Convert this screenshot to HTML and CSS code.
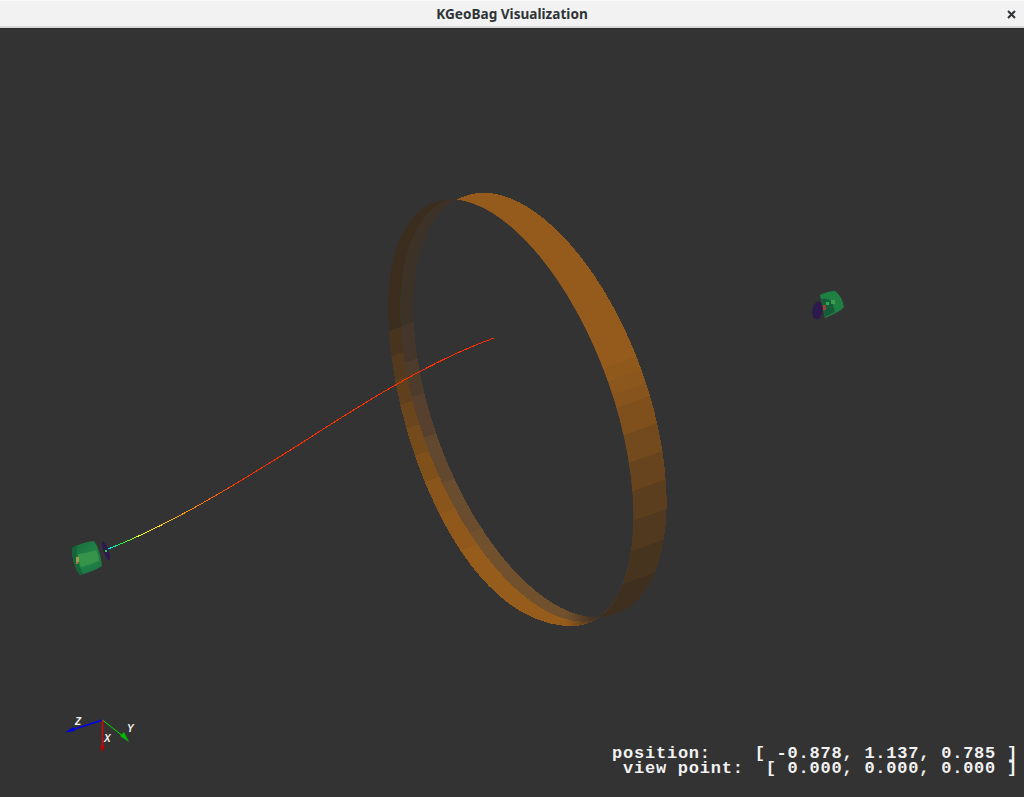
FILE: index.html
```html
<!DOCTYPE html>
<html lang="en">
<head>
	<meta charset="utf-8">
	<title>KGeoBag Visualization</title>
	<link rel="stylesheet" href="styles.css">
</head>
<body>
	<div class="window">
		<header class="titlebar">
			<span class="title">KGeoBag Visualization</span>
			<svg class="close" width="9" height="9" viewBox="0 0 9 9"><path d="M1 1L8 8M8 1L1 8"/></svg>
		</header>
		<main class="viewport">
			<svg class="scene" width="1024" height="769" viewBox="0 28 1024 769">
				<defs>
					<linearGradient id="band-right" gradientUnits="userSpaceOnUse" x1="640" y1="340" x2="735" y2="603">
						<stop offset="0" stop-color="#945b1c"/><stop offset=".05" stop-color="#945b1c"/>
						<stop offset=".05" stop-color="#90591c"/><stop offset=".1" stop-color="#90591c"/>
						<stop offset=".1" stop-color="#8b571c"/><stop offset=".15" stop-color="#8b571c"/>
						<stop offset=".15" stop-color="#86541c"/><stop offset=".2" stop-color="#86541c"/>
						<stop offset=".2" stop-color="#7f501c"/><stop offset=".3" stop-color="#7f501c"/>
						<stop offset=".3" stop-color="#724a1d"/><stop offset=".4" stop-color="#724a1d"/>
						<stop offset=".4" stop-color="#67441d"/><stop offset=".5" stop-color="#67441d"/>
						<stop offset=".5" stop-color="#5b3e1e"/><stop offset=".6" stop-color="#5b3e1e"/>
						<stop offset=".6" stop-color="#50391e"/><stop offset=".7" stop-color="#50391e"/>
						<stop offset=".7" stop-color="#47341e"/><stop offset=".8" stop-color="#47341e"/>
						<stop offset=".8" stop-color="#3f2f1e"/><stop offset="1" stop-color="#3d2e1e"/>
					</linearGradient>
					<linearGradient id="band-outer" gradientUnits="userSpaceOnUse" x1="400" y1="290" x2="519" y2="619">
						<stop offset="0" stop-color="#3c2e1f"/><stop offset=".1" stop-color="#3c2e1f"/>
						<stop offset=".1" stop-color="#47331e"/><stop offset=".17" stop-color="#47331e"/>
						<stop offset=".17" stop-color="#53391d"/><stop offset=".24" stop-color="#53391d"/>
						<stop offset=".24" stop-color="#5f3f1c"/><stop offset=".31" stop-color="#5f3f1c"/>
						<stop offset=".31" stop-color="#6b451c"/><stop offset=".38" stop-color="#6b451c"/>
						<stop offset=".38" stop-color="#764b1b"/><stop offset=".46" stop-color="#764b1b"/>
						<stop offset=".46" stop-color="#80501b"/><stop offset=".54" stop-color="#80501b"/>
						<stop offset=".54" stop-color="#89551b"/><stop offset=".64" stop-color="#89551b"/>
						<stop offset=".64" stop-color="#90591b"/><stop offset=".76" stop-color="#90591b"/>
						<stop offset=".76" stop-color="#965c1b"/><stop offset="1" stop-color="#965c1b"/>
					</linearGradient>
					<linearGradient id="band-inner" gradientUnits="userSpaceOnUse" x1="400" y1="290" x2="519" y2="619">
						<stop offset="0" stop-color="#3d3228"/><stop offset=".1" stop-color="#3d3228"/>
						<stop offset=".1" stop-color="#44362a"/><stop offset=".2" stop-color="#44362a"/>
						<stop offset=".2" stop-color="#4d3b2c"/><stop offset=".3" stop-color="#4d3b2c"/>
						<stop offset=".3" stop-color="#57412e"/><stop offset=".42" stop-color="#57412e"/>
						<stop offset=".42" stop-color="#61482f"/><stop offset=".56" stop-color="#61482f"/>
						<stop offset=".56" stop-color="#6a4d2f"/><stop offset=".72" stop-color="#6a4d2f"/>
						<stop offset=".72" stop-color="#71502e"/><stop offset="1" stop-color="#71502e"/>
					</linearGradient>
					<linearGradient id="band-tip" gradientUnits="userSpaceOnUse" x1="565" y1="0" x2="600" y2="0">
						<stop offset="0" stop-color="#3d2e1e" stop-opacity="0"/>
						<stop offset="1" stop-color="#3d2e1e" stop-opacity="1"/>
					</linearGradient>
					<linearGradient id="track" gradientUnits="userSpaceOnUse" x1="108" y1="549" x2="240" y2="480">
						<stop offset="0" stop-color="#00e8ff"/>
						<stop offset=".1" stop-color="#20f040"/>
						<stop offset=".24" stop-color="#ffff20"/>
						<stop offset=".55" stop-color="#ff9a10"/>
						<stop offset="1" stop-color="#ff3000"/>
					</linearGradient>
					<linearGradient id="can-left" gradientUnits="userSpaceOnUse" x1="72" y1="545" x2="100" y2="572">
						<stop offset="0" stop-color="#1a6c3c"/>
						<stop offset=".45" stop-color="#1f8046"/>
						<stop offset="1" stop-color="#1c7a42"/>
					</linearGradient>
					<clipPath id="rim-back">
						<path d="M388 307C388 430 460 618 565 626A224 102 70 1 0 388 307Z"/>
					</clipPath>
				</defs>

				<!-- ring: offset rims, the hole painted last -->
				<g class="flat">
					<path fill="url(#band-right)" d="M464.1 196.4A222 106 70 1 1 615.9 613.6A222 106 70 1 1 464.1 196.4Z"/>
					<path fill="url(#band-outer)" d="M388 307C388 430 460 618 565 626A224 102 70 1 0 388 307Z"/>
					<g clip-path="url(#rim-back)">
						<path fill="url(#band-inner)" d="M448.7 199.4A223 105 70 1 1 601.3 618.6A223 105 70 1 1 448.7 199.4Z"/>
						<path fill="url(#band-tip)" d="M388 307C388 430 460 618 565 626A224 102 70 1 0 388 307Z"/>
						<path fill="#333333" d="M464.1 196.4A222 106 70 1 1 615.9 613.6A222 106 70 1 1 464.1 196.4Z"/>
					</g>
				</g>

				<!-- particle track -->
				<path class="track flat" d="M108 549C170 525 235 485 300 444C365 402 430 361 494 338"/>

				<!-- source detector, lower left -->
				<g>
					<path fill="url(#can-left)" d="M72 548Q83 542 94 541Q100 549 102 566Q92 572 80 575Q72 565 72 548Z"/>
					<path fill="#16643a" d="M72 548Q74 546 77 545Q75 560 83 574L80 575Q72 565 72 548Z"/>
					<path fill="#359449" d="M78 554Q88 553 96 550Q99 555 99 561Q90 565 81 567Q78 560 78 554Z"/>
					<rect x="76" y="557" width="3" height="5" fill="#9c9c50"/>
					<rect x="76" y="562" width="2" height="2" fill="#b87038"/>
					<ellipse cx="106" cy="551" rx="2.5" ry="10" transform="rotate(-20 106 551)" fill="#2c1a4c"/>
					<rect x="105" y="550" width="2" height="2" fill="#20e040"/>
				</g>

				<!-- far detector, upper right -->
				<g>
					<path fill="#1f8044" d="M820 295Q828 291 835 291Q842 296 844 307Q840 312 825 318Z"/>
					<path fill="#175c38" d="M821 299Q828 297 832 302L835 312L825 317Z"/>
					<rect x="831" y="300" width="4" height="4" fill="#3f9c4b"/>
					<rect x="823" y="305" width="3" height="5" fill="#a04030"/>
					<rect x="826" y="302" width="3" height="3" fill="#2fa84c"/>
					<ellipse cx="817.5" cy="310.5" rx="5" ry="9" transform="rotate(10 817.5 310.5)" fill="#2c1a4c"/>
				</g>

				<!-- axes -->
				<g class="axes">
					<line x1="102.5" y1="720" x2="70" y2="730.5" stroke="#0000ee"/>
					<polygon fill="#0000d8" points="65,732.5 73,727 75,731"/>
					<line class="thin" x1="102.5" y1="720" x2="124" y2="737" stroke="#00e000"/>
					<polygon fill="#00b800" points="129,742 120,736 124,732"/>
					<line x1="102.5" y1="720" x2="102.5" y2="746" stroke="#e00000"/>
					<polygon fill="#c00000" points="102,752 100,746 105,746"/>
					<text class="axis-label" x="75" y="725">Z</text>
					<text class="axis-label" x="127" y="731.5">Y</text>
					<text class="axis-label" x="104" y="742">X</text>
				</g>
			</svg>
			<div class="readout"><div>position:    [ -0.878, 1.137, 0.785 ]</div><div>view point:  [ 0.000, 0.000, 0.000 ]</div></div>
		</main>
	</div>
</body>
</html>
```
FILE: styles.css
```css
* { margin: 0; padding: 0; box-sizing: border-box; }
html, body { height: 100%; background: #333333; overflow: hidden; }

.window { height: 100vh; display: flex; flex-direction: column; }

.titlebar {
	height: 28px;
	flex: none;
	position: relative;
	display: flex;
	align-items: center;
	justify-content: center;
	background: #f2f2f2;
	border-top: 1px solid #fafafa;
	border-bottom: 2px solid #d8d8d6;
	font: 700 13.6px "Noto Sans", sans-serif;
	color: #2e3436;
}
.close { position: absolute; right: 8px; top: 9px; }
.close path { stroke: #2e3436; stroke-width: 2; fill: none; }

.viewport { flex: 1; position: relative; background: #333333; box-shadow: inset 0 1px #2b2b2b; }
.scene { position: absolute; left: 0; top: 0; display: block; }
.flat { shape-rendering: crispEdges; }
.track { fill: none; stroke: url(#track); stroke-width: 1; }
.axes line { stroke-width: 1.5; }
.axes .thin { stroke-width: 1; }
.axis-label { font: italic 700 10px "Liberation Sans", sans-serif; fill: #f0f0f0; }

.readout {
	position: absolute;
	right: 6px;
	bottom: 21px;
	text-align: right;
	white-space: pre;
	font: 700 17px/15px "Liberation Mono", monospace;
	letter-spacing: 0.77px;
	color: #f2f2f2;
}
```
